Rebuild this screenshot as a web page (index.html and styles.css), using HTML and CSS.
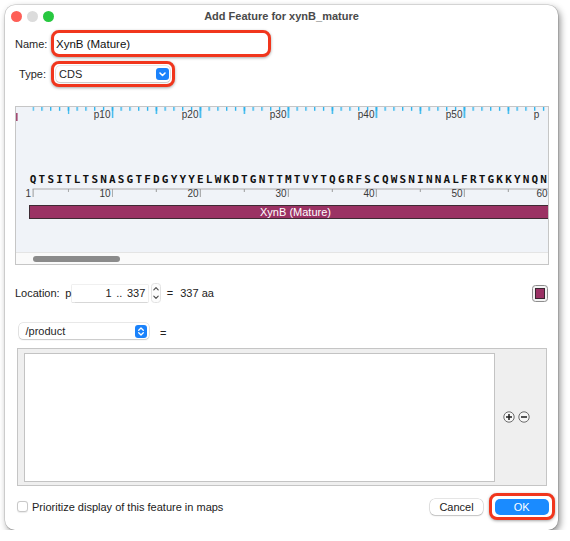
FILE: index.html
```html
<!DOCTYPE html>
<html lang="en">
<head>
    <meta charset="UTF-8"/>
    <title>Add Feature for xynB_mature</title>
    <link rel="stylesheet" href="styles.css">
</head>
<body>
<div class="window">
    <div class="titlebar">
        <div class="lights">
            <span class="light close"></span>
            <span class="light min"></span>
            <span class="light max"></span>
        </div>
        <div class="title">Add Feature for xynB_mature</div>
        <div></div>
    </div>

    <div class="head-row">
        <label class="head-label" for="name">Name:</label>
        <div class="ring name-ring">
            <input id="name" class="name-input" type="text" value="XynB (Mature)"/>
        </div>
    </div>

    <div class="head-row type-row">
        <span class="head-label">Type:</span>
        <div class="ring type-ring">
            <div class="popup type-popup">
                <span>CDS</span>
                <svg class="popup-btn" width="13" height="12" viewBox="0 0 13 12">
                    <rect width="13" height="12" rx="3" fill="#1a82fb"/>
                    <path d="M4 5l2.5 2.5L9 5" fill="none" stroke="#fff" stroke-width="1.6" stroke-linecap="round" stroke-linejoin="round"/>
                </svg>
            </div>
        </div>
    </div>

    <!-- sequence map: ruler, residues, numbering, feature -->
    <div class="seq-view">
        <svg class="ruler" width="532" height="14" viewBox="0 0 532 14">
            <defs>
                <pattern id="top1" x="16.5" y="0" width="8.8" height="14" patternUnits="userSpaceOnUse">
                    <rect width="1.3" height="3.8" fill="#22b0ec"/>
                </pattern>
                <pattern id="top5" x="51.7" y="0" width="88" height="14" patternUnits="userSpaceOnUse">
                    <rect width="1.3" height="7" fill="#22b0ec"/>
                </pattern>
                <pattern id="top10" x="95.6" y="0" width="88" height="14" patternUnits="userSpaceOnUse">
                    <rect width="1.5" height="11" fill="#22b0ec"/>
                </pattern>
            </defs>
            <rect x="16.5" width="516" height="14" fill="url(#top1)"/>
            <rect x="51.7" width="481" height="14" fill="url(#top5)"/>
            <rect x="95.6" width="437" height="14" fill="url(#top10)"/>
            <rect x="0" y="6" width="1.6" height="9" fill="#a24a72"/>
            <text x="94.5" y="10.7" text-anchor="end">p10</text>
            <text x="182.5" y="10.7" text-anchor="end">p20</text>
            <text x="270.5" y="10.7" text-anchor="end">p30</text>
            <text x="358.5" y="10.7" text-anchor="end">p40</text>
            <text x="446.5" y="10.7" text-anchor="end">p50</text>
            <text x="517.8" y="10.7">p</text>
        </svg>

        <div class="residues">QTSITLTSNASGTFDGYYYELWKDTGNTTMTVYTQGRFSCQWSNINNALFRTGKKYNQN</div>

        <svg class="ruler" width="532" height="14" viewBox="0 0 532 14">
            <defs>
                <pattern id="base5" x="51.8" y="0" width="88" height="14" patternUnits="userSpaceOnUse">
                    <rect y="3" width="1" height="3" fill="#9b9b9b"/>
                </pattern>
                <pattern id="base10" x="95.8" y="0" width="88" height="14" patternUnits="userSpaceOnUse">
                    <rect y="3" width="1" height="8" fill="#9b9b9b"/>
                </pattern>
            </defs>
            <rect x="16.6" y="2.5" width="516" height="1" fill="#ababab"/>
            <rect x="16.6" y="3" width="1" height="8" fill="#9b9b9b"/>
            <rect x="51.8" width="481" height="14" fill="url(#base5)"/>
            <rect x="95.8" width="437" height="14" fill="url(#base10)"/>
            <text x="15" y="11" text-anchor="end">1</text>
            <text x="94.5" y="11" text-anchor="end">10</text>
            <text x="182.5" y="11" text-anchor="end">20</text>
            <text x="270.5" y="11" text-anchor="end">30</text>
            <text x="358.5" y="11" text-anchor="end">40</text>
            <text x="446.5" y="11" text-anchor="end">50</text>
            <text x="531.5" y="11" text-anchor="end">60</text>
        </svg>

        <div class="feature-bar">XynB (Mature)</div>

        <div class="hscroll"><div class="thumb"></div></div>
    </div>

    <div class="location-row">
        <span>Location:</span>
        <span class="loc-prefix">p</span>
        <div class="loc-field">1 .. 337</div>
        <svg class="stepper" width="10" height="20" viewBox="0 0 10 20">
            <rect x="0.5" y="0.5" width="9" height="19" rx="3" fill="#fcfcfc" stroke="#e2e2e2"/>
            <path d="M2.8 6.8L5 4.6l2.2 2.2M2.8 13.2L5 15.4l2.2-2.2" fill="none" stroke="#474747" stroke-width="1.1" stroke-linecap="round" stroke-linejoin="round"/>
        </svg>
        <span class="eq">=</span>
        <span class="aa">337 aa</span>
        <svg class="swatch" width="16" height="17" viewBox="0 0 16 17">
            <rect x="0.5" y="0.5" width="15" height="16" rx="3" fill="#f3f3f3" stroke="#8d8d8d"/>
            <rect x="3.5" y="3.5" width="9" height="10" fill="#9a3164" stroke="#3a2630"/>
        </svg>
    </div>

    <div class="qualifier-row">
        <div class="popup qualifier-popup">
            <span>/product</span>
            <svg class="popup-btn" width="12" height="13" viewBox="0 0 12 13">
                <rect width="12" height="13" rx="3" fill="#1a82fb"/>
                <path d="M3.7 5.2L6 3l2.3 2.2M3.7 7.8L6 10l2.3-2.2" fill="none" stroke="#fff" stroke-width="1.3" stroke-linecap="round" stroke-linejoin="round"/>
            </svg>
        </div>
        <span class="eq">=</span>
    </div>

    <div class="value-box">
        <div class="value-text"></div>
        <div class="value-tools">
            <svg width="12" height="12" viewBox="0 0 12 12">
                <circle cx="6" cy="6" r="5.2" fill="#f7f7f7" stroke="#6b6b6b"/>
                <path d="M6 3v6M3 6h6" stroke="#1e1e1e" stroke-width="1.5"/>
            </svg>
            <svg width="12" height="12" viewBox="0 0 12 12">
                <circle cx="6" cy="6" r="5.2" fill="#f7f7f7" stroke="#6b6b6b"/>
                <path d="M3 6h6" stroke="#1e1e1e" stroke-width="1.5"/>
            </svg>
        </div>
    </div>

    <div class="footer">
        <span class="checkbox"></span>
        <span class="check-label">Prioritize display of this feature in maps</span>
        <button class="btn cancel">Cancel</button>
        <div class="ring ok-ring"><button class="btn ok">OK</button></div>
    </div>
</div>
</body>
</html>
```

FILE: styles.css
```css
* {
    box-sizing: border-box;
}

body {
    margin: 0;
    background: #fff;
    font-family: "Liberation Sans", Arial, sans-serif;
    font-size: 11px;
    color: #222;
}

.window {
    width: 553px;
    height: 525px;
    margin: 5px 0 0 5px;
    padding: 0 9px 0 10px;
    background: #fff;
    border-radius: 10px;
    box-shadow: 2px 3px 7px rgba(0, 0, 0, 0.45), 0 0 0 0.5px rgba(0, 0, 0, 0.2);
    display: flex;
    flex-direction: column;
}

/* title bar */
.titlebar {
    height: 22px;
    margin: 0 -9px 0 -10px;
    display: grid;
    grid-template-columns: 1fr auto 1fr;
    align-items: center;
}

.lights {
    display: flex;
    gap: 5px;
    padding-left: 5.5px;
}

.light {
    width: 11px;
    height: 11px;
    border-radius: 50%;
}

.close { background: #fe5f57; }
.min { background: #dcdcdc; }
.max { background: #28c840; }

.title {
    font-weight: bold;
    color: #4a4a4a;
}

/* name / type */
.head-row {
    display: flex;
    align-items: center;
    margin-top: 3px;
}

.type-row {
    margin-top: 4px;
}

.head-label {
    width: 31px;
    margin-right: 5px;
    text-align: right;
    color: #262626;
}

.ring {
    border: 3px solid #f1361d;
    border-radius: 8px;
    background: #fff;
    box-shadow: 0 1px 3px rgba(0, 0, 0, 0.35);
}

.name-ring {
    width: 220px;
    height: 27px;
    padding: 0 2px;
}

.name-input {
    width: 100%;
    height: 100%;
    border: none;
    outline: none;
    padding: 0;
    background: transparent;
    font: 11.5px "Liberation Sans", Arial, sans-serif;
    color: #111;
}

.type-ring {
    width: 124px;
    height: 26px;
    padding: 2px;
}

.popup {
    display: flex;
    align-items: center;
    background: #fff;
    border-radius: 4px;
    box-shadow: 0 0 0 0.5px rgba(0, 0, 0, 0.18), 0 1px 1.5px rgba(0, 0, 0, 0.14);
    color: #1f1f1f;
}

.type-popup {
    height: 100%;
    padding: 0 1px 0 3px;
}

.popup-btn {
    margin-left: auto;
    display: block;
}

/* sequence map */
.seq-view {
    margin-top: 19px;
    height: 159px;
    border: 1px solid #c6c6c6;
    background: #f0f3f8;
    overflow: hidden;
    display: flex;
    flex-direction: column;
}

.ruler {
    display: block;
    flex: none;
}

.ruler text {
    font: 10px "Liberation Sans", Arial, sans-serif;
    fill: #3a3a3a;
}

.residues {
    margin-top: 52px;
    height: 13px;
    padding-left: 13.8px;
    font: bold 11px/13px "DejaVu Sans Mono", monospace;
    letter-spacing: 2.18px;
    color: #111;
    white-space: nowrap;
}

.feature-bar {
    flex: none;
    margin: 5px 0 0 13px;
    height: 14px;
    padding-left: 13px;
    background: #9b3264;
    border: 1px solid #3e2a33;
    border-right: none;
    color: #fff;
    line-height: 12px;
    text-align: center;
    white-space: nowrap;
}

.hscroll {
    margin-top: auto;
    height: 12px;
    padding: 3px 0 0 17px;
    background: #fafafa;
    border-top: 1px solid #e4e4e4;
}

.thumb {
    width: 87px;
    height: 6px;
    border-radius: 3px;
    background: #8b8b8b;
}

/* location */
.location-row {
    margin-top: 18px;
    height: 20px;
    display: flex;
    align-items: center;
}

.loc-prefix {
    margin-left: 5.5px;
}

.loc-field {
    margin-left: 1px;
    width: 76px;
    height: 17px;
    padding-right: 3px;
    line-height: 17px;
    text-align: right;
    word-spacing: 1.5px;
    background: #fff;
    box-shadow: 0 0 0 0.5px rgba(0, 0, 0, 0.12), 0 0.5px 1px rgba(0, 0, 0, 0.1);
}

.stepper {
    margin-left: 2.5px;
    display: block;
}

.location-row .eq {
    margin-left: 6px;
}

.aa {
    margin-left: 7px;
}

.swatch {
    margin-left: auto;
    margin-right: 1px;
    display: block;
}

/* qualifier */
.qualifier-row {
    margin-top: 20px;
    height: 16px;
    display: flex;
    align-items: center;
}

.qualifier-popup {
    margin-left: 4px;
    width: 130px;
    height: 16px;
    padding: 0 2px 0 6.5px;
}

.qualifier-row .eq {
    margin-left: 11px;
    margin-top: 3px;
}

.value-box {
    margin: 9px 2px 0 2px;
    height: 138px;
    padding: 3.7px 0 0 6.4px;
    border: 1px solid #c5c5c5;
    background: #efefef;
    display: flex;
}

.value-text {
    width: 471px;
    height: 129px;
    background: #fff;
    border: 1px solid #c3c3c3;
}

.value-tools {
    align-self: center;
    margin: -4px 0 0 7.5px;
    display: flex;
    gap: 3.5px;
}

.value-tools svg {
    display: block;
}

/* footer */
.footer {
    margin-top: 7px;
    height: 27px;
    display: flex;
    align-items: center;
}

.checkbox {
    margin-left: 2px;
    width: 11px;
    height: 11px;
    border: 1px solid #c8c8c8;
    border-radius: 3px;
    background: #fff;
    box-shadow: 0 0.5px 1px rgba(0, 0, 0, 0.08);
}

.check-label {
    margin-left: 4px;
    color: #222;
}

.btn {
    height: 16px;
    padding: 0;
    border: none;
    border-radius: 5px;
    font: 11px "Liberation Sans", Arial, sans-serif;
}

.cancel {
    margin-left: auto;
    width: 53px;
    background: #fff;
    color: #222;
    box-shadow: 0 0 0 0.5px rgba(0, 0, 0, 0.2), 0 1px 1.5px rgba(0, 0, 0, 0.16);
}

.ok-ring {
    margin: 0 -5.5px 0 6px;
    padding: 2.5px 3px;
}

.ok {
    display: block;
    width: 53.5px;
    background: #1a8bff;
    color: #fff;
}
```
